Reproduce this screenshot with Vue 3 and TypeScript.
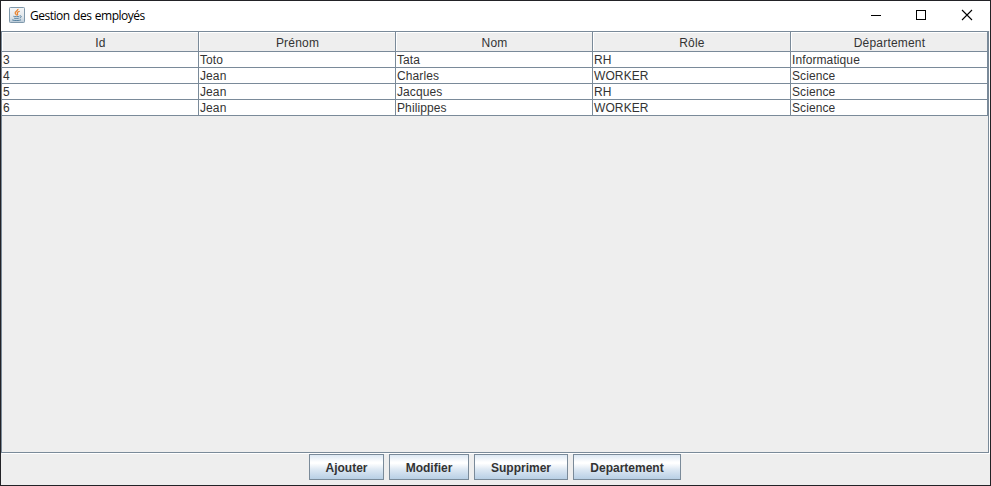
<script setup lang="ts">
interface Employee {
  id: number
  firstName: string
  lastName: string
  role: string
  department: string
}

interface Action {
  label: string
  width: number
}

const columns: string[] = ['Id', 'Prénom', 'Nom', 'Rôle', 'Département']

const employees: Employee[] = [
  { id: 3, firstName: 'Toto', lastName: 'Tata', role: 'RH', department: 'Informatique' },
  { id: 4, firstName: 'Jean', lastName: 'Charles', role: 'WORKER', department: 'Science' },
  { id: 5, firstName: 'Jean', lastName: 'Jacques', role: 'RH', department: 'Science' },
  { id: 6, firstName: 'Jean', lastName: 'Philippes', role: 'WORKER', department: 'Science' },
]

const actions: Action[] = [
  { label: 'Ajouter', width: 75 },
  { label: 'Modifier', width: 80 },
  { label: 'Supprimer', width: 94 },
  { label: 'Departement', width: 108 },
]
</script>

<template>
  <div class="window">
    <header class="titlebar">
      <svg class="app-icon" width="16" height="16" viewBox="0 0 16 16">
        <defs>
          <linearGradient id="tile" x1="0" y1="0" x2="0" y2="1">
            <stop offset="0" stop-color="#f6f7f8" />
            <stop offset="0.6" stop-color="#e3e8ec" />
            <stop offset="1" stop-color="#b9cad8" />
          </linearGradient>
        </defs>
        <rect x="0.5" y="0.5" width="15" height="15" rx="0.8" fill="url(#tile)" stroke="#7f98ab" />
        <path d="M9 1.8C9.4 3.6 5.4 4.4 6.2 6.3C6.5 7 7.3 7.5 7.5 8.3M10.7 4.2C8.8 4.8 7.7 5.6 8.5 6.7C8.9 7.3 8.7 7.9 8.2 8.4" fill="none" stroke="#e8822e" stroke-width="1.2" />
        <path d="M4.4 9.3C5.5 9.9 9.4 9.8 10.4 9.2M5.2 11.2C6.4 11.7 8.8 11.6 9.8 11.1M10.8 8.9C13 8.5 12.6 10.6 10.6 11M3.2 12.9C5 13.8 10.7 13.7 12 12.8" fill="none" stroke="#55809f" stroke-width="1" />
      </svg>
      <span class="title">Gestion des employés</span>
      <div class="controls">
        <svg width="45" height="30" viewBox="0 0 45 30"><path d="M17 14.5H27" stroke="#000" /></svg>
        <svg width="46" height="30" viewBox="0 0 46 30"><rect x="17.5" y="9.5" width="9" height="9" fill="none" stroke="#000" /></svg>
        <svg width="45" height="30" viewBox="0 0 45 30"><path d="M17 9L27 19M27 9L17 19" stroke="#000" fill="none" stroke-width="1.1" /></svg>
      </div>
    </header>

    <main class="scroll-pane">
      <div class="table">
        <div class="row head">
          <div v-for="name in columns" :key="name" class="cell">{{ name }}</div>
        </div>
        <div v-for="e in employees" :key="e.id" class="row">
          <div class="cell">{{ e.id }}</div>
          <div class="cell">{{ e.firstName }}</div>
          <div class="cell">{{ e.lastName }}</div>
          <div class="cell">{{ e.role }}</div>
          <div class="cell">{{ e.department }}</div>
        </div>
      </div>
    </main>

    <footer class="actions">
      <button
        v-for="action in actions"
        :key="action.label"
        type="button"
        class="button"
        :style="{ width: action.width + 'px' }"
      >{{ action.label }}</button>
    </footer>
  </div>
</template>

<style scoped>
.window {
  box-sizing: border-box;
  width: 991px;
  height: 486px;
  display: flex;
  flex-direction: column;
  border: 1px solid #222226;
  background: #eeeeee;
  color: #333333;
  font: 12px/17px "Liberation Sans", Arial, sans-serif;
  overflow: hidden;
}
.titlebar {
  flex: 0 0 30px;
  display: flex;
  align-items: center;
  background: #ffffff;
  padding-left: 8px;
  color: #000000;
}
.app-icon {
  display: block;
  margin-top: -2px;
}
.title {
  margin-left: 5px;
  font: 12px/16px "Open Sans", "Noto Sans", sans-serif;
  letter-spacing: -0.48px;
  word-spacing: 0.7px;
  white-space: nowrap;
}
.controls {
  display: flex;
  margin-left: auto;
}
.controls svg {
  display: block;
}
.scroll-pane {
  flex: 0 0 420px;
  border: 1px solid #7a8a99;
  margin-right: 1px;
  box-shadow: 1px 1px 0 #ffffff;
}
.table {
  width: 986px;
}
.row {
  display: grid;
  grid-template-columns: 197px 197px 197px 198px 197px;
  grid-template-rows: 16px;
  background: #ffffff;
}
.cell {
  box-sizing: border-box;
  height: 100%;
  border-right: 1px solid #7a8a99;
  border-bottom: 1px solid #7a8a99;
  padding-left: 1px;
  letter-spacing: 0.1px;
  white-space: nowrap;
}
.head {
  grid-template-rows: 20px;
}
.head .cell {
  padding: 2px 0 0 1px;
  line-height: 19px;
  letter-spacing: 0.2px;
  text-align: center;
  background: #eeeeee;
  box-shadow: inset 1px 1px 0 #ffffff;
}
.actions {
  flex: 1;
  display: flex;
  justify-content: center;
  align-items: flex-start;
  gap: 5px;
  padding: 1px 1px 0 0;
}
.button {
  box-sizing: border-box;
  height: 26px;
  padding: 1px 0 0;
  border: 1px solid #7a8a99;
  border-radius: 0;
  background: linear-gradient(#dde8f3 0%, #ffffff 30%, #ffffff 35%, #dde8f3 60%, #b8cfe5 100%);
  color: #333333;
  font: bold 12px/24px "Liberation Sans", Arial, sans-serif;
  text-align: center;
}
</style>
